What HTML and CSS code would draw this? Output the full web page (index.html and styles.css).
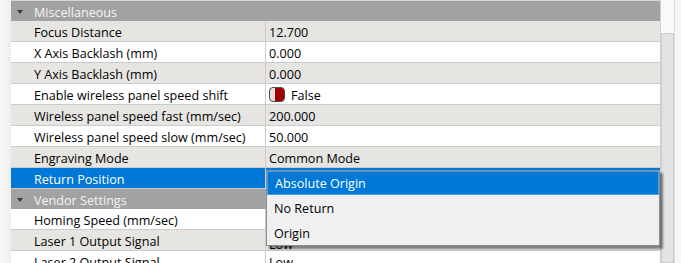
FILE: index.html
```html
<!DOCTYPE html>
<html lang="en">
<head>
    <meta charset="UTF-8">
    <title>Properties</title>
    <link rel="stylesheet" href="styles.css">
</head>
<body>
    <div class="window">
        <div class="gutter"></div>

        <div class="grid">
            <div class="category"><span class="arrow"></span>Miscellaneous</div>
            <div class="row alt"><div class="label">Focus Distance</div><div class="value">12.700</div></div>
            <div class="row"><div class="label">X Axis Backlash (mm)</div><div class="value">0.000</div></div>
            <div class="row alt"><div class="label">Y Axis Backlash (mm)</div><div class="value">0.000</div></div>
            <div class="row">
                <div class="label">Enable wireless panel speed shift</div>
                <div class="value"><span class="toggle"><span class="toggle-on"></span></span>False</div>
            </div>
            <div class="row alt"><div class="label">Wireless panel speed fast (mm/sec)</div><div class="value">200.000</div></div>
            <div class="row"><div class="label">Wireless panel speed slow (mm/sec)</div><div class="value">50.000</div></div>
            <div class="row alt"><div class="label">Engraving Mode</div><div class="value">Common Mode</div></div>
            <div class="row selected"><div class="label">Return Position</div><div class="value"></div></div>
            <div class="category"><span class="arrow"></span>Vendor Settings</div>
            <div class="row"><div class="label">Homing Speed (mm/sec)</div><div class="value"></div></div>
            <div class="row alt"><div class="label">Laser 1 Output Signal</div><div class="value low">Low</div></div>
            <div class="row"><div class="label">Laser 2 Output Signal</div><div class="value">Low</div></div>
        </div>

        <div class="scrollbar"><div class="thumb"></div></div>
        <div class="edge"></div>

        <!-- open combo list for Return Position -->
        <div class="dropdown">
            <div class="option active">Absolute Origin</div>
            <div class="option">No Return</div>
            <div class="option">Origin</div>
        </div>
    </div>
</body>
</html>
```

FILE: styles.css
```css
* {
    margin: 0;
    padding: 0;
    box-sizing: border-box;
}

body {
    font-family: 'Open Sans', 'Noto Sans', sans-serif;
    font-size: 12.6px;
    color: #000;
    background-color: #f3f3f3;
    overflow: hidden;
}

.window {
    position: relative;
    display: flex;
    height: 263px;
    overflow: hidden;
}

.gutter {
    width: 11px;
    background: linear-gradient(to right, #f8f8f8, #eeeeee);
}

.grid {
    width: 650px;
    border-right: 1px solid #cfcfcf;
    border-top: 1px solid #d6d6d6;
    background-color: #fff;
}

.category {
    display: flex;
    align-items: center;
    height: 20px;
    padding-left: 23px;
    padding-top: 2px;
    background-color: #a2a2a2;
    color: #f4f4f4;
    position: relative;
}

.arrow {
    position: absolute;
    left: 6px;
    top: 9px;
    width: 0;
    height: 0;
    border-left: 3px solid transparent;
    border-right: 3px solid transparent;
    border-top: 4px solid #3a3a3a;
}

.row {
    display: flex;
    height: 21px;
    border-bottom: 1px solid #cbcbcb;
    background-color: #fff;
}

.row.alt {
    background-color: #e7e5e2;
}

.row.selected {
    background-color: #0078d7;
    color: #fff;
}

.label {
    width: 255px;
    padding-left: 23px;
    padding-top: 2px;
    border-right: 1px solid #cbcbcb;
    display: flex;
    align-items: center;
    white-space: nowrap;
}

.value {
    flex: 1;
    padding-left: 3px;
    padding-top: 2px;
    display: flex;
    align-items: center;
    white-space: nowrap;
}

/* only the top of this one shows under the open list */
.value.low {
    align-items: flex-end;
    line-height: 10px;
    overflow: hidden;
}

.toggle {
    display: inline-block;
    width: 16px;
    height: 15px;
    border: 1px solid #4a4a4a;
    border-radius: 4px;
    background-color: #e2e2e2;
    margin-right: 6px;
    margin-top: -2px;
    overflow: hidden;
    position: relative;
}

.toggle-on {
    position: absolute;
    right: 0;
    top: 0;
    bottom: 0;
    width: 9px;
    background-color: #a00000;
}

.scrollbar {
    width: 13px;
    background-color: #f9f9f9;
    padding-top: 33px;
}

.thumb {
    height: 100%;
    background-color: #e3e3e3;
    border: 1px solid #cdcdcd;
}

.edge {
    flex: 1;
    border-left: 1px solid #dcdcdc;
    background-color: #f6f6f6;
}

.dropdown {
    position: absolute;
    left: 266px;
    top: 170px;
    width: 394px;
    height: 76px;
    background-color: #f0f0f0;
    border: 1px solid #8d8d8d;
    box-shadow: 3px 3px 2px rgba(0, 0, 0, 0.45);
}

.option {
    height: 25px;
    padding-left: 7px;
    padding-top: 1px;
    display: flex;
    align-items: center;
}

.option.active {
    height: 24px;
    background-color: #0078d7;
    border: 1px solid #46a0e8;
    color: #fff;
}
```
